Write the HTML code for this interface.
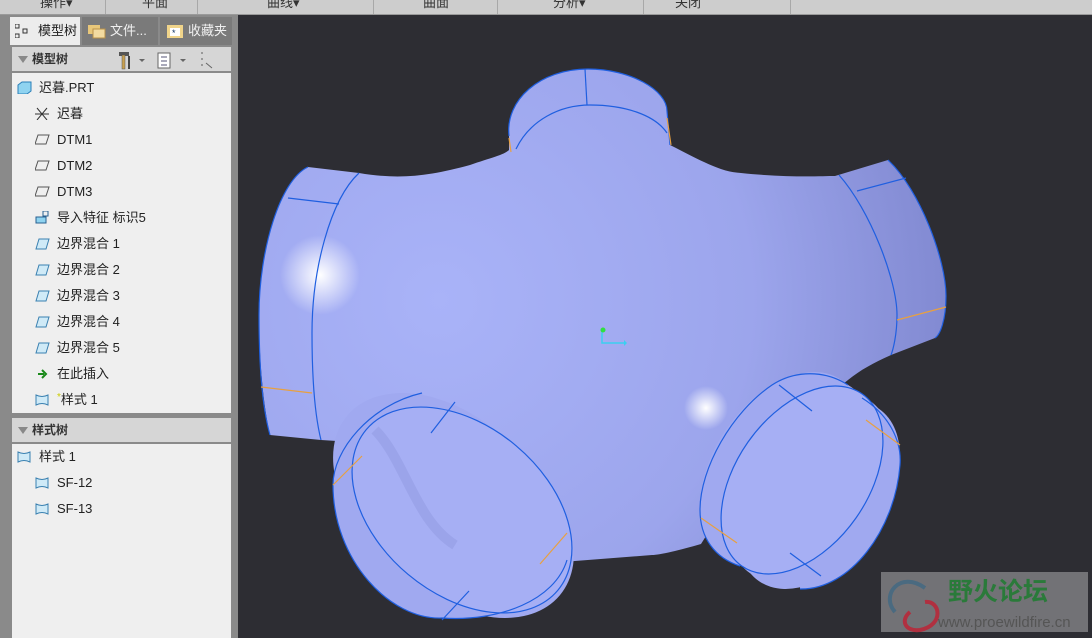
<!DOCTYPE html>
<html><head><meta charset="utf-8"><style>
*{margin:0;padding:0;box-sizing:border-box}
body{width:1092px;height:638px;overflow:hidden;background:#2d2d33;font-family:"Liberation Sans","Noto Sans CJK SC",sans-serif;position:relative}
#top{position:absolute;left:0;top:0;width:1092px;height:15px;background:#cdcdcd;border-bottom:1px solid #9a9a9a;overflow:hidden}
#top span{position:absolute;top:-8px;font-size:13px;color:#333}
#top i{position:absolute;top:0;width:1px;height:15px;background:#a8a8a8}
#panel{position:absolute;left:0;top:15px;width:238px;height:623px;background:#8a8a8a}
.tab{position:absolute;top:2px;height:28px;font-size:13px;line-height:28px;color:#f0f0f0;padding-left:28px}
.hdr{position:absolute;left:12px;width:219px;height:24px;background:#d6d6d6;font-size:12px;font-weight:bold;color:#333;line-height:24px;padding-left:20px}
.hdr:before{content:"";position:absolute;left:6px;top:9px;border-left:5px solid transparent;border-right:5px solid transparent;border-top:7px solid #888}
.list{position:absolute;left:12px;width:219px;background:#efefef}
.r{position:absolute;font-size:13px;color:#222;height:20px;line-height:20px;padding-left:22px}
.ic{position:absolute;left:0;top:3px;width:15px;height:13px}
</style></head><body>
<div id="top">
<span style="left:40px">操作▾</span><i style="left:105px"></i>
<span style="left:142px">平面</span><i style="left:197px"></i>
<span style="left:267px">曲线▾</span><i style="left:373px"></i>
<span style="left:423px">曲面</span><i style="left:497px"></i>
<span style="left:553px">分析▾</span><i style="left:643px"></i>
<span style="left:675px">关闭</span><i style="left:790px"></i>
</div>
<div id="panel">
<div class="tab" style="left:10px;width:70px;background:#ececec;color:#222;">
<svg style="position:absolute;left:5px;top:7px" width="14" height="14"><rect x="0" y="0" width="4" height="4" fill="none" stroke="#333"/><rect x="0" y="10" width="4" height="4" fill="none" stroke="#333"/><rect x="8" y="5" width="4" height="4" fill="none" stroke="#333"/></svg>模型树</div>
<div class="tab" style="left:82px;width:76px;background:#7a7a7a">
<svg style="position:absolute;left:6px;top:6px" width="18" height="16"><rect x="0" y="2" width="12" height="9" fill="#e8c77a"/><rect x="5" y="6" width="12" height="9" fill="#f3dba0" stroke="#b89048"/></svg>文件...</div>
<div class="tab" style="left:160px;width:72px;background:#7a7a7a">
<svg style="position:absolute;left:7px;top:7px" width="16" height="14"><rect x="0" y="1" width="16" height="13" fill="#f0d48a"/><rect x="3" y="4" width="10" height="8" fill="#fff"/><text x="5" y="12" font-size="9" fill="#136">*</text></svg>收藏夹</div>
<div class="hdr" style="top:32px">模型树
<svg style="position:absolute;left:105px;top:3px" width="110" height="20"><rect x="2" y="2" width="10" height="4" fill="#555"/><rect x="5" y="5" width="3" height="14" fill="#c8a050" stroke="#555" stroke-width=".5"/><rect x="11" y="6" width="2" height="13" fill="#444"/><path d="M22 9l3 3 3-3z" fill="#666"/><rect x="41" y="3" width="12" height="15" fill="#fff" stroke="#666"/><path d="M44 7h6M44 11h6M44 15h6" stroke="#557"/><path d="M63 9l3 3 3-3z" fill="#666"/><rect x="84" y="2" width="2" height="2" fill="#999"/><rect x="84" y="8" width="2" height="2" fill="#999"/><rect x="84" y="14" width="2" height="2" fill="#999"/><path d="M89 13l6 5" stroke="#666"/></svg></div>
<div class="list" style="top:58px;height:340px">
<div class="r" style="left:5px;top:5px"><svg class="ic"><path d="M1 4l4-3h9v9l-4 3H1z" fill="#8fd3f0" stroke="#2a7fb8"/></svg>迟暮.PRT</div>
<div class="r" style="left:23px;top:31px"><svg class="ic"><path d="M2 1l5 6-5 6M12 1L7 7l5 6M0 7h14" stroke="#333" fill="none"/></svg>迟暮</div>
<div class="r" style="left:23px;top:57px"><svg class="ic"><path d="M3 2h11L11 11H0z" fill="none" stroke="#555"/></svg>DTM1</div>
<div class="r" style="left:23px;top:83px"><svg class="ic"><path d="M3 2h11L11 11H0z" fill="none" stroke="#555"/></svg>DTM2</div>
<div class="r" style="left:23px;top:109px"><svg class="ic"><path d="M3 2h11L11 11H0z" fill="none" stroke="#555"/></svg>DTM3</div>
<div class="r" style="left:23px;top:135px"><svg class="ic"><rect x="1" y="6" width="10" height="6" fill="#8fd3f0" stroke="#2a6090"/><rect x="8" y="0" width="5" height="5" fill="none" stroke="#2a6090"/></svg>导入特征 标识5</div>
<div class="r" style="left:23px;top:161px"><svg class="ic"><path d="M1 12l3-10h10l-3 10z" fill="#cfeaf7" stroke="#3a80b0"/></svg>边界混合 1</div>
<div class="r" style="left:23px;top:187px"><svg class="ic"><path d="M1 12l3-10h10l-3 10z" fill="#cfeaf7" stroke="#3a80b0"/></svg>边界混合 2</div>
<div class="r" style="left:23px;top:213px"><svg class="ic"><path d="M1 12l3-10h10l-3 10z" fill="#cfeaf7" stroke="#3a80b0"/></svg>边界混合 3</div>
<div class="r" style="left:23px;top:239px"><svg class="ic"><path d="M1 12l3-10h10l-3 10z" fill="#cfeaf7" stroke="#3a80b0"/></svg>边界混合 4</div>
<div class="r" style="left:23px;top:265px"><svg class="ic"><path d="M1 12l3-10h10l-3 10z" fill="#cfeaf7" stroke="#3a80b0"/></svg>边界混合 5</div>
<div class="r" style="left:23px;top:291px"><svg class="ic"><path d="M3 7h6M7 3l4 4-4 4" stroke="#1a8a1a" stroke-width="2" fill="none"/></svg>在此插入</div>
<div class="r" style="left:23px;top:317px"><svg class="ic"><path d="M1 2q6 3 12 0v10q-6-3-12 0z" fill="#cfeaf7" stroke="#3a80b0"/></svg><span style="color:#cc0;font-size:10px;position:relative;top:-4px">*</span>样式 1</div>
</div>
<div class="hdr" style="top:403px">样式树</div>
<div class="list" style="top:429px;height:194px">
<div class="r" style="left:5px;top:3px"><svg class="ic"><path d="M1 2q6 3 12 0v10q-6-3-12 0z" fill="#cfeaf7" stroke="#3a80b0"/></svg>样式 1</div>
<div class="r" style="left:23px;top:29px"><svg class="ic"><path d="M1 2q6 3 12 0v10q-6-3-12 0z" fill="#cfeaf7" stroke="#3a80b0"/></svg>SF-12</div>
<div class="r" style="left:23px;top:55px"><svg class="ic"><path d="M1 2q6 3 12 0v10q-6-3-12 0z" fill="#cfeaf7" stroke="#3a80b0"/></svg>SF-13</div>
</div>
</div>
<svg style="position:absolute;left:0;top:0" width="1092" height="638">
<defs>
<radialGradient id="g" cx="440" cy="300" r="520" gradientUnits="userSpaceOnUse"><stop offset="0" stop-color="#a9b3f8"/><stop offset=".6" stop-color="#9ca5ec"/><stop offset="1" stop-color="#8088d0"/></radialGradient>
<radialGradient id="h1" cx="320" cy="275" r="40" gradientUnits="userSpaceOnUse"><stop offset="0" stop-color="#fff"/><stop offset="1" stop-color="#fff" stop-opacity="0"/></radialGradient>
<radialGradient id="h2" cx="706" cy="408" r="22" gradientUnits="userSpaceOnUse"><stop offset="0" stop-color="#fff"/><stop offset="1" stop-color="#fff" stop-opacity="0"/></radialGradient>
</defs>
<path d="M308,167 L359,173 C400,180 429,176 470,165 C490,158 504,155 509,150 L509,136 C505,100 540,69 588,69 C630,69 667,90 667,111 L670,145 C700,160 720,172 741,173 C790,178 820,176 835,176 L888,160 C920,190 946,260 946,296 C946,320 940,335 935,338 L891,355 C875,362 860,370 848,380 L760,450 L701,544 C680,550 660,555 652,555 L562,562 L400,450 L353,442 L321,440 L270,435 C262,400 259,350 259,315 C259,250 280,180 308,167 Z" fill="url(#g)"/>
<g fill="#a0a9f0">
<ellipse cx="443" cy="496" rx="125" ry="84" transform="rotate(40 443 496)"/>
<ellipse cx="452" cy="503" rx="125" ry="84" transform="rotate(40 452 503)"/>
<ellipse cx="464" cy="515" rx="125" ry="84" transform="rotate(40 464 515)"/>
<path d="M422,393 C370,405 333,450 333,485 C333,560 390,620 442,618 C500,622 555,600 567,560 L462,510 Z"/>
<ellipse cx="781" cy="466" rx="66" ry="105" transform="rotate(35 781 466)"/>
<ellipse cx="791" cy="473" rx="66" ry="105" transform="rotate(35 791 473)"/>
<ellipse cx="810" cy="487" rx="66" ry="105" transform="rotate(35 810 487)"/>
<ellipse cx="819" cy="495" rx="66" ry="105" transform="rotate(35 819 495)"/>
<path d="M848,385 C825,370 795,370 772,385 C732,412 700,468 700,510 C700,538 715,558 740,566 L802,480 Z"/>
<path d="M862,398 C888,414 902,440 900,465 C895,530 850,590 800,589 L802,480 Z"/>
</g>
<ellipse cx="462" cy="510" rx="125" ry="84" transform="rotate(40 462 510)" fill="#a6aff4"/>
<ellipse cx="802" cy="480" rx="66" ry="105" transform="rotate(35 802 480)" fill="#a6aff4"/>
<path d="M375,430 C405,460 415,520 455,545" stroke="#8890d8" stroke-width="10" fill="none" opacity=".35"/>
<rect x="270" y="235" width="90" height="80" fill="url(#h1)"/>
<rect x="680" y="385" width="50" height="50" fill="url(#h2)"/>
<g stroke="#1f5fe0" stroke-width="1.2" fill="none">
<path d="M509,136 C505,100 540,69 588,69 C630,69 667,90 667,111 L670,145"/>
<path d="M516,149 C530,120 560,105 590,105 C625,105 655,115 667,133"/>
<path d="M585,69 L587,105"/>
<path d="M308,167 C280,180 259,250 259,315 C259,370 263,410 270,435"/>
<path d="M359,173 C330,200 312,270 312,333 C312,390 316,420 321,440"/>
<path d="M288,198 L339,204"/>
<path d="M888,160 C920,190 946,260 946,296 C946,320 940,335 935,338"/>
<path d="M839,175 C870,210 897,280 897,315 C897,335 893,350 891,355"/>
<path d="M857,191 L906,178"/>
<ellipse cx="462" cy="510" rx="125" ry="84" transform="rotate(40 462 510)"/>
<path d="M422,393 C370,405 333,450 333,485 C333,560 390,620 442,618 C500,622 555,600 567,560"/>
<path d="M455,402 L431,433 M469,591 L442,620"/>
<ellipse cx="802" cy="480" rx="66" ry="105" transform="rotate(35 802 480)"/>
<path d="M848,385 C825,370 795,370 772,385 C732,412 700,468 700,510 C700,538 715,558 740,566"/>
<path d="M862,398 C888,414 902,440 900,465 C895,530 850,590 800,589"/>
<path d="M779,385 L812,411 M790,553 L821,576"/>
</g>
<g stroke="#e8a040" stroke-width="1.2">
<path d="M261,387 L312,393 M897,320 L946,307 M362,456 L333,485 M567,533 L540,564 M866,420 L900,445 M701,518 L737,543 M509,138 L511,152 M667,118 L671,145"/>
</g>
<path d="M602,330 V343 H624" stroke="#3ad0f0" stroke-width="1.5" fill="none"/>
<circle cx="603" cy="330" r="2.5" fill="#30e040"/>
<path d="M624,340 l3,3 -3,3z" fill="#3ad0f0"/>
<rect x="881" y="572" width="207" height="60" fill="#727276"/>
<path d="M925,588 C900,570 880,595 895,612" stroke="#4a6a80" stroke-width="4" fill="none"/>
<path d="M925,602 C940,600 945,625 920,630 C905,632 900,620 910,612" stroke="#b03040" stroke-width="4" fill="none"/>
<text x="948" y="600" font-size="25" font-weight="bold" fill="#2a7a3a" font-family="Liberation Sans,Noto Sans CJK SC,sans-serif">野火论坛</text>
<text x="938" y="627" font-size="15" fill="#555" font-family="Liberation Sans,sans-serif">www.proewildfire.cn</text>
</svg>
</body></html>
